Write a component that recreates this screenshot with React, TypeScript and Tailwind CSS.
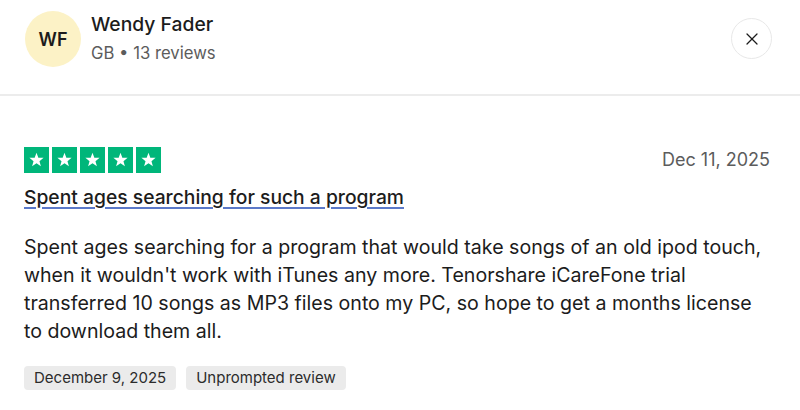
import { X } from "lucide-react";

function Star() {
  return (
    <div className="flex h-[26px] w-[25px] items-center justify-center bg-[#00b67a]">
      <svg viewBox="0 0 24 24" className="h-[17px] w-[17px]" fill="white">
        <path d="M12 2.5l2.6 6.9 7.4.3-5.8 4.6 2 7.1L12 17.3l-6.2 4.1 2-7.1L2 9.7l7.4-.3z" />
      </svg>
    </div>
  );
}

export default function App() {
  return (
    <div
      className="h-[410px] w-[800px] overflow-hidden bg-white text-[#1c1c1c]"
      style={{ fontFamily: "Inter, 'Noto Sans', sans-serif" }}
    >
      <header className="flex h-[96px] items-start justify-between border-b-2 border-[#ececec] pl-[25px] pr-[28px] pt-[11px]">
        <div className="flex items-start gap-[10px]">
          <div className="flex h-[56px] w-[56px] items-center justify-center rounded-full bg-[#fcf2c6] text-[18px] font-semibold text-[#1c1c1c]">
            WF
          </div>
          <div className="pt-[1px]">
            <div className="text-[19.3px] leading-[24px] font-medium">Wendy Fader</div>
            <div className="mt-[6px] text-[16.7px] leading-[22px] text-[#5c5c5c]">GB • 13 reviews</div>
          </div>
        </div>
        <button className="mt-[7px] flex h-[41px] w-[41px] items-center justify-center rounded-full border border-[#e8e8e8]">
          <X className="h-[20px] w-[20px] text-[#1c1c1c]" strokeWidth={1.5} />
        </button>
      </header>

      <section className="pl-[24px] pr-[24px] pt-[50px]">
        <div className="flex items-center justify-between">
          <div className="flex gap-[3px]">
            <Star />
            <Star />
            <Star />
            <Star />
            <Star />
          </div>
          <div className="pr-[6px] text-[18px] text-[#5c5c5c]">Dec 11, 2025</div>
        </div>
        <h2 className="mt-[12px] text-[19.3px] leading-[24px] font-medium underline decoration-[#5b79c9] decoration-[2px] underline-offset-[3px]">
          Spent ages searching for such a program
        </h2>
        <p className="mt-[24px] max-w-[740px] text-[19.6px] leading-[28px] text-[#1c1c1c]">
          Spent ages searching for a program that would take songs of an old ipod touch, when it wouldn't work
          with iTunes any more. Tenorshare iCareFone trial transferred 10 songs as MP3 files onto my PC, so hope
          to get a months license to download them all.
        </p>
        <div className="mt-[21px] flex gap-[10px]">
          <span className="rounded-[4px] bg-[#ebebeb] px-[10px] py-[2px] text-[15px] leading-[20px] text-[#2c2c2c]">
            December 9, 2025
          </span>
          <span className="rounded-[4px] bg-[#ebebeb] px-[10px] py-[2px] text-[15px] leading-[20px] text-[#2c2c2c]">
            Unprompted review
          </span>
        </div>
      </section>
    </div>
  );
}
